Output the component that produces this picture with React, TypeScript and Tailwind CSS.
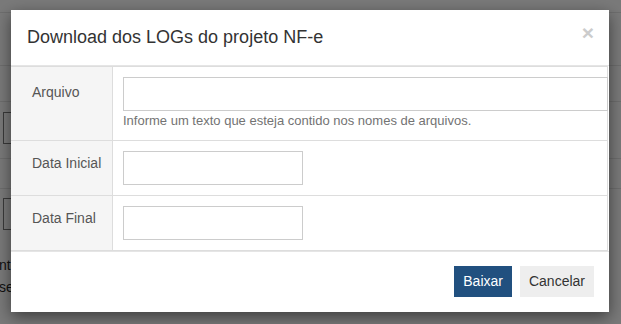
import React from "react"

const font = { fontFamily: '"Liberation Sans", Arial, sans-serif' }

function Row({
  label,
  labelPad,
  children,
}: {
  label: string
  labelPad: string
  children: React.ReactNode
}) {
  return (
    <div className="flex border-t border-[#dddddd]">
      <div
        className={`w-[102px] shrink-0 bg-[#f5f5f5] border-r border-[#dddddd] pl-[21px] text-[14px] leading-5 text-[#555555] ${labelPad}`}
      >
        {label}
      </div>
      <div className="flex-1 pl-[10px] pt-[10px] pb-[10px]">{children}</div>
    </div>
  )
}

export default function App() {
  return (
    <div
      className="relative w-[621px] h-[324px] overflow-hidden bg-[#7a7a7a]"
      style={font}
    >
      {/* faded page behind the overlay */}
      <div className="flex flex-col">
        <div className="h-[13px] border-b border-[#6e6e6e]" />
        <div className="h-[53px] border-b border-[#6e6e6e]" />
        <div className="h-[36px] border-b border-[#6e6e6e]" />
        <div className="h-[57px] border-b border-[#6e6e6e] pl-[3px] pt-[10px]">
          <div className="w-[20px] h-[32px] border border-[#3a3a3a]" />
        </div>
        <div className="h-[30px] border-b border-[#6e6e6e]" />
        <div className="h-[65px] pl-[3px] pt-[9px]">
          <div className="w-[20px] h-[32px] border border-[#3a3a3a]" />
        </div>
        <div className="text-[14px] leading-[22px] text-[#111111] -ml-[1px]">
          <div>nte</div>
          <div>se</div>
        </div>
      </div>

      {/* modal */}
      <div className="absolute left-[11px] top-[10px] w-[598px] h-[302px] bg-white shadow-[0_5px_15px_rgba(0,0,0,0.5)] flex flex-col">
        <div className="h-[56px] shrink-0 flex items-center justify-between pl-[16px] pr-[16px] border-b border-[#e5e5e5]">
          <span className="text-[18px] text-[#333333] leading-6 pb-[1px]">
            Download dos LOGs do projeto NF-e
          </span>
          <span className="text-[21px] font-bold text-[#cccccc] leading-none -mt-[10px] mr-[-1px]">
            ×
          </span>
        </div>

        <div className="flex flex-col border-r border-b border-[#dddddd] mr-[1px]">
          <Row label="Arquivo" labelPad="pt-[15px]">
            <input
              className="block w-[485px] h-[34px] border border-[#cccccc] outline-none"
              type="text"
            />
            <div className="text-[13px] leading-[18px] text-[#737373] mt-[1px]">
              Informe um texto que esteja contido nos nomes de arquivos.
            </div>
          </Row>
          <Row label="Data Inicial" labelPad="pt-[12px]">
            <input
              className="block w-[180px] h-[34px] border border-[#cccccc] outline-none"
              type="text"
            />
          </Row>
          <Row label="Data Final" labelPad="pt-[12px]">
            <input
              className="block w-[180px] h-[34px] border border-[#cccccc] outline-none"
              type="text"
            />
          </Row>
        </div>

        <div className="flex-1 border-t border-[#e5e5e5] flex items-start justify-end gap-2 pt-[14px] pr-[15px]">
          <button className="h-[31px] px-[9px] bg-[#21507f] text-white text-[14px]">
            Baixar
          </button>
          <button className="h-[31px] px-[9px] bg-[#eeeeee] text-[#333333] text-[14px]">
            Cancelar
          </button>
        </div>
      </div>
    </div>
  )
}
